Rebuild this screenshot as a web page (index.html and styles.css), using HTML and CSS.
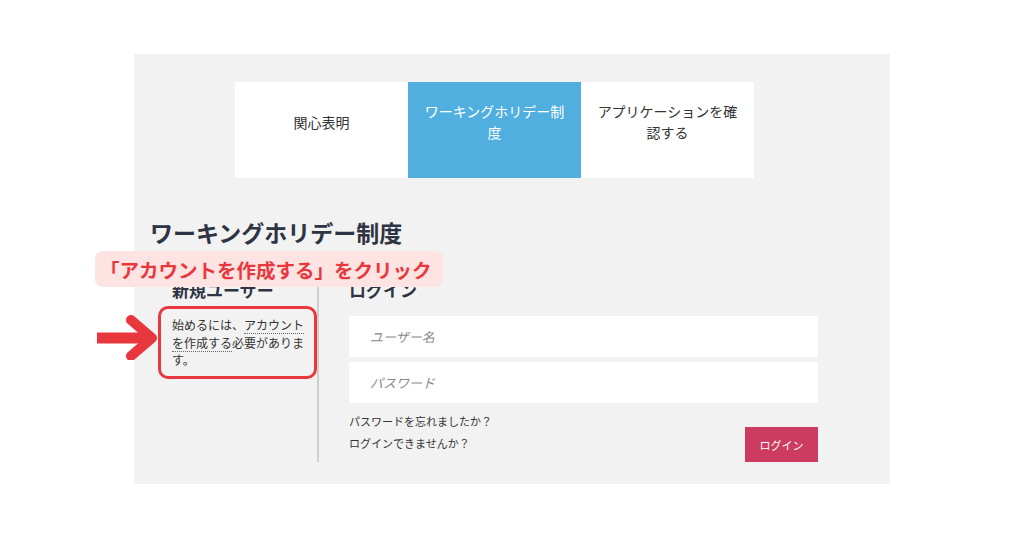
FILE: index.html
```html
<!DOCTYPE html>
<html lang="ja">
<head>
<meta charset="utf-8">
<title>ワーキングホリデー制度</title>
<link rel="stylesheet" href="styles.css">
</head>
<body>
<div class="panel">
  <div class="tabs">
    <div class="tab">関心表明</div>
    <div class="tab tab-active">ワーキングホリデー制度</div>
    <div class="tab">アプリケーションを確認する</div>
  </div>
  <h1 class="title">ワーキングホリデー制度</h1>
  <div class="columns">
    <div class="col-left">
      <h2 class="sub">新規ユーザー</h2>
      <p class="intro">始めるには、<a class="link" href="#">アカウントを作成する</a>必要があります。</p>
    </div>
    <div class="col-right">
      <h2 class="sub">ログイン</h2>
      <div class="field"><span class="placeholder">ユーザー名</span></div>
      <div class="field"><span class="placeholder">パスワード</span></div>
      <div class="actions">
        <div class="help">
          <div class="help-line">パスワードを忘れましたか？</div>
          <div class="help-line">ログインできませんか？</div>
        </div>
        <button class="btn">ログイン</button>
      </div>
    </div>
  </div>

  <div class="callout">「アカウントを作成する」をクリック</div>
  <div class="highlight"></div>
  <svg class="arrow" width="62" height="46" viewBox="0 0 62 46">
    <line x1="1" y1="24" x2="50" y2="24" stroke="#e8383d" stroke-width="11"/>
    <polyline points="35,6 56,24 35,42" fill="none" stroke="#e8383d" stroke-width="10" stroke-linejoin="round" stroke-linecap="round"/>
  </svg>
</div>
</body>
</html>
```
FILE: styles.css
```css
* { box-sizing: border-box; }
html, body {
  margin: 0;
  padding: 0;
  background: #ffffff;
}
body {
  font-family: "Noto Sans CJK JP", "Noto Sans", sans-serif;
  color: #333;
}
.panel {
  position: relative;
  margin: 54px 0 0 134px;
  width: 756px;
  height: 430px;
  background: #f2f2f2;
  padding: 28px 0 0 16px;
}
.tabs {
  display: flex;
  margin-left: 85px;
}
.tab {
  width: 173px;
  height: 96px;
  background: #ffffff;
  display: flex;
  align-items: center;
  justify-content: center;
  text-align: center;
  padding: 0 15px 16px;
  font-size: 14px;
  line-height: 21px;
  color: #333;
}
.tab-active {
  background: #51afe0;
  color: #ffffff;
}
.title {
  margin: 40px 0 0;
  font-size: 23px;
  line-height: 29px;
  font-weight: 700;
  color: #2f3442;
}
.columns {
  display: flex;
  margin-top: 32px;
  padding-left: 22px;
}
.col-left {
  width: 147px;
  padding-right: 7px;
  border-right: 2px solid #cfcfcf;
  height: 183px;
}
.col-right {
  width: 499px;
  padding-left: 30px;
}
.sub {
  margin: 0;
  font-size: 17px;
  line-height: 22px;
  font-weight: 700;
  color: #2f3442;
}
.intro {
  margin: 15px 0 0;
  font-size: 12px;
  line-height: 17.5px;
  color: #333;
}
.link {
  color: #333;
  text-decoration: none;
  border-bottom: 1px dotted #666;
}
.field {
  width: 469px;
  height: 41px;
  background: #ffffff;
  margin-top: 15px;
  display: flex;
  align-items: center;
  padding-left: 21px;
}
.field + .field {
  margin-top: 5px;
}
.placeholder {
  font-size: 13px;
  font-style: italic;
  color: #8a8a8a;
}
.actions {
  display: flex;
  justify-content: space-between;
  align-items: flex-start;
  width: 469px;
  margin-top: 7px;
}
.help-line {
  font-size: 11px;
  line-height: 22px;
  color: #333;
}
.btn {
  margin-top: 17px;
  width: 73px;
  height: 35px;
  border: none;
  background: #cc3c61;
  color: #ffffff;
  font-family: "Noto Sans CJK JP", "Noto Sans", sans-serif;
  font-size: 11px;
  padding: 0;
}
.callout {
  position: absolute;
  left: -39px;
  top: 197px;
  width: 348px;
  height: 36px;
  background: #fde3e1;
  border-radius: 8px;
  padding-left: 5px;
  display: flex;
  align-items: center;
  font-size: 19.5px;
  font-weight: 700;
  color: #e8383d;
  white-space: nowrap;
}
.highlight {
  position: absolute;
  left: 24px;
  top: 252px;
  width: 159px;
  height: 73px;
  border: 3px solid #e8383d;
  border-radius: 10px;
}
.arrow {
  position: absolute;
  left: -38px;
  top: 260px;
}
```
